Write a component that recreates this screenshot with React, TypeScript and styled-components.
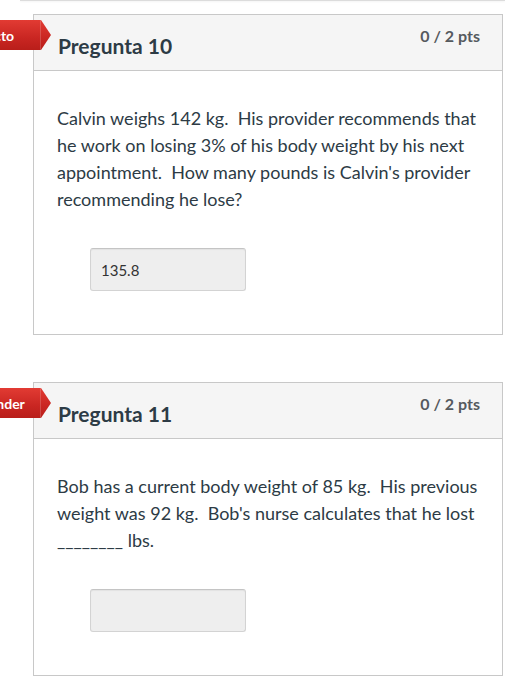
import React from "react";
import styled, { createGlobalStyle } from "styled-components";

const Global = createGlobalStyle`
  html, body { margin: 0; padding: 0; background: #ffffff; }
  body { font-family: Lato, "Open Sans", sans-serif; color: #2d3b45; }
`;

const Page = styled.div`
  position: relative;
  width: 524px;
  height: 700px;
  overflow: hidden;
  background: #fff;
`;

const TopRule = styled.div`
  margin-left: 20px;
  width: 485px;
  height: 1px;
  background: #dcdcdc;
  box-shadow: 0 1px 2px rgba(0, 0, 0, 0.06);
`;

const Card = styled.section<{ $top: number }>`
  position: relative;
  margin: ${(p) => p.$top}px 0 0 33px;
  width: 468px;
  border: 1px solid #c8c8c8;
  background: #fff;
`;

const Header = styled.header`
  display: flex;
  justify-content: space-between;
  align-items: flex-start;
  height: 55px;
  padding: 0 22px 0 24px;
  background: #f5f5f5;
  border-bottom: 1px solid #c8c8c8;
`;

const Title = styled.h2`
  margin: 19px 0 0 0;
  font-family: Lato, sans-serif;
  font-weight: 700;
  font-size: 21px;
  line-height: 24px;
  color: #2d3b45;
`;

const Points = styled.div`
  margin-top: 11px;
  font-family: Lato, sans-serif;
  font-weight: 700;
  font-size: 16px;
  line-height: 20px;
  color: #555a5e;
`;

const Body = styled.div`
  padding: 34px 20px 43px 23px;
`;

const Question = styled.p`
  margin: 0;
  font-family: Lato, sans-serif;
  font-size: 18px;
  line-height: 27px;
  color: #2d3b45;
  white-space: pre-wrap;
`;

const Answer = styled.div`
  margin: 35px 0 0 33px;
  box-sizing: border-box;
  width: 156px;
  height: 43px;
  padding: 0 10px;
  display: flex;
  align-items: center;
  background: #eeeeee;
  border: 1px solid #d3d3d3;
  border-top-color: #c4c4c4;
  border-radius: 3px;
  box-shadow: inset 0 1px 1px rgba(0, 0, 0, 0.05);
  font-family: Lato, sans-serif;
  font-size: 15px;
  color: #333;
`;

const Tag = styled.div`
  position: absolute;
  top: 5px;
  left: -117px;
  width: 134px;
  height: 30px;
  padding-right: 4px;
  box-sizing: border-box;
  display: flex;
  align-items: center;
  justify-content: center;
  clip-path: polygon(0 0, 124px 0, 134px 15px, 124px 30px, 0 30px);
  background: linear-gradient(#e23b33, #c92622 60%, #b91e1a);
  color: #fff;
  font-family: Lato, sans-serif;
  font-weight: 700;
  font-size: 14px;
  white-space: nowrap;
  &::after {
    content: "";
    position: absolute;
    left: 123px;
    top: 0;
    width: 1px;
    height: 30px;
    background: rgba(255, 255, 255, 0.18);
  }
`;

type Q = {
  top: number;
  label: string;
  title: string;
  text: string;
  answer: string;
};

const questions: Q[] = [
  {
    top: 13,
    label: "Incorrecto",
    title: "Pregunta 10",
    text:
      "Calvin weighs 142 kg.  His provider recommends that he work on losing 3% of his body weight by his next appointment.  How many pounds is Calvin's provider recommending he lose?",
    answer: "135.8",
  },
  {
    top: 47,
    label: "Sin responder",
    title: "Pregunta 11",
    text:
      "Bob has a current body weight of 85 kg.  His previous weight was 92 kg.  Bob's nurse calculates that he lost ________ lbs.",
    answer: "",
  },
];

export default function App() {
  return (
    <Page>
      <Global />
      <TopRule />
      {questions.map((q) => (
        <Card key={q.title} $top={q.top}>
          <Tag>{q.label}</Tag>
          <Header>
            <Title>{q.title}</Title>
            <Points>0 / 2 pts</Points>
          </Header>
          <Body>
            <Question>{q.text}</Question>
            <Answer>{q.answer}</Answer>
          </Body>
        </Card>
      ))}
    </Page>
  );
}
